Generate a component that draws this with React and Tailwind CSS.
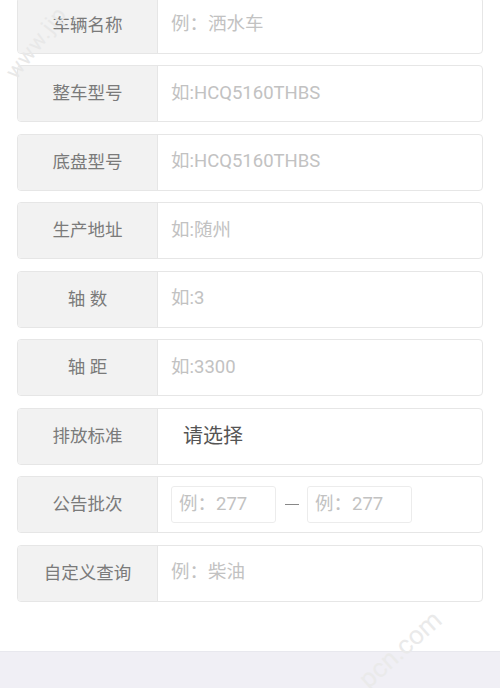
const rows = [
  { label: "车辆名称", placeholder: "例：洒水车" },
  { label: "整车型号", placeholder: "如:HCQ5160THBS" },
  { label: "底盘型号", placeholder: "如:HCQ5160THBS" },
  { label: "生产地址", placeholder: "如:随州" },
  { label: "轴 数", placeholder: "如:3" },
  { label: "轴 距", placeholder: "如:3300" },
  { label: "排放标准", select: true },
  { label: "公告批次", range: true },
  { label: "自定义查询", placeholder: "例：柴油" },
];

const font = { fontFamily: '"Roboto", "Noto Sans CJK SC", sans-serif' };

function Row({ row }) {
  return (
    <div className="flex h-[57px] rounded-[4px] border border-[#e6e6e6] overflow-hidden bg-white">
      <div className="w-[140px] shrink-0 bg-[#f2f2f2] border-r border-[#e6e6e6] flex items-center justify-center text-[17.5px] text-[#7a7a7a]">
        {row.label}
      </div>
      {row.select ? (
        <div className="flex-1 flex items-center pl-[25px] text-[20px] text-[#555]">请选择</div>
      ) : row.range ? (
        <div className="flex-1 flex items-center pl-[13px]">
          <div className="w-[105px] h-[37px] rounded-[3px] border border-[#ececec] flex items-center pl-[7px] text-[18.5px] text-[#c2c2c2]">
            例：277
          </div>
          <div className="w-[31px] flex justify-center">
            <div className="w-[14px] h-[1.5px] bg-[#888]" />
          </div>
          <div className="w-[105px] h-[37px] rounded-[3px] border border-[#ececec] flex items-center pl-[7px] text-[18.5px] text-[#c2c2c2]">
            例：277
          </div>
        </div>
      ) : (
        <div className="flex-1 flex items-center pl-[13px] text-[18.5px] text-[#c2c2c2]">{row.placeholder}</div>
      )}
    </div>
  );
}

export default function App() {
  return (
    <div className="relative w-[500px] h-[688px] bg-white overflow-hidden flex flex-col" style={font}>
      <div className="px-[17px] -mt-[3.5px] flex flex-col gap-[11.5px]">
        {rows.map((r) => (
          <Row key={r.label} row={r} />
        ))}
      </div>
      <div className="mt-auto h-[37px] bg-[#f0eff5] border-t border-[#e8e8ee]" />

      {/* watermarks */}
      <div className="absolute left-[-6px] top-[26px] -rotate-[52deg] text-[22px] text-[#e8e8e8] pointer-events-none tracking-[1px]">
        www.jip
      </div>
      <div className="absolute left-[350px] top-[630px] -rotate-[42deg] text-[26px] text-[#eaeaea] pointer-events-none">
        pcn.com
      </div>
    </div>
  );
}
